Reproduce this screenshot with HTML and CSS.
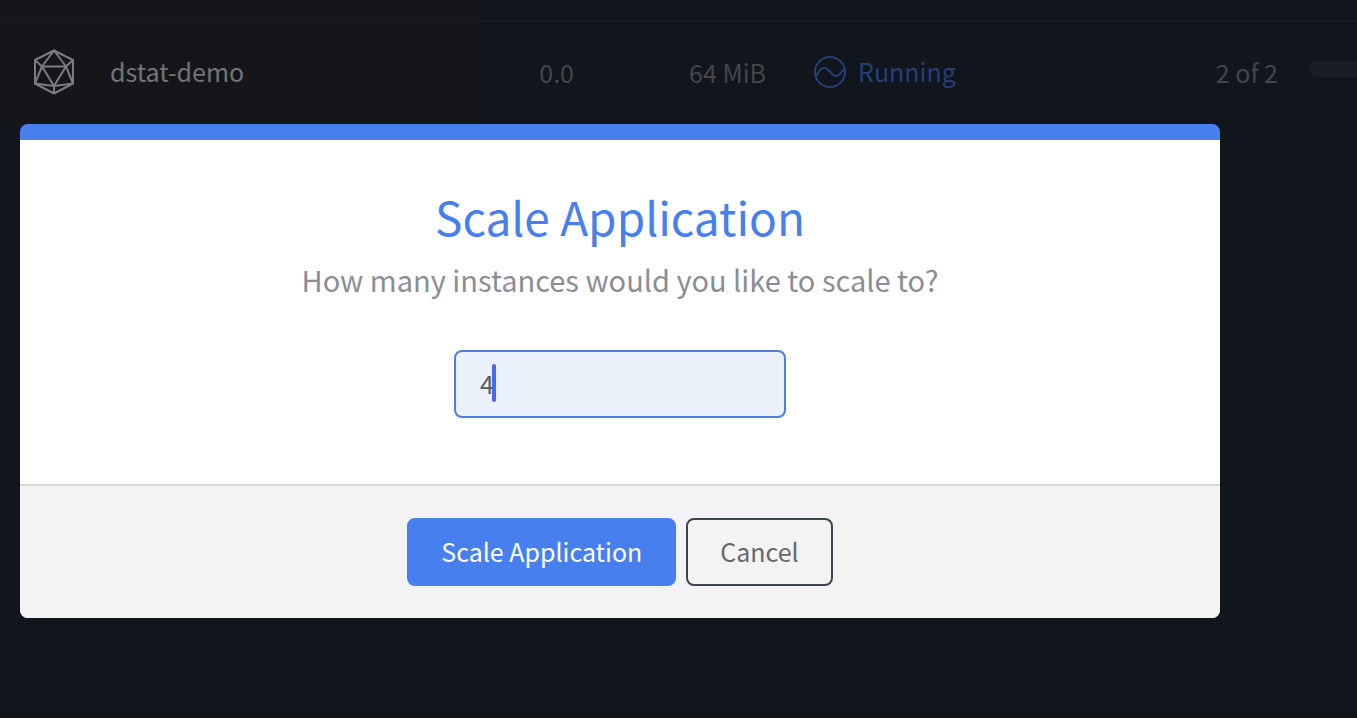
FILE: index.html
```html
<!DOCTYPE html>
<html lang="en">
<head>
<meta charset="utf-8">
<title>Scale Application</title>
<link rel="stylesheet" href="styles.css">
</head>
<body>
<main class="page">
  <table class="services">
    <colgroup>
      <col class="col-name"><col class="col-cpu"><col class="col-mem"><col class="col-status"><col class="col-count"><col class="col-bar">
    </colgroup>
    <tbody>
      <tr>
        <td class="name">
          <a class="service" href="#dstat-demo">
            <svg class="service-icon" width="42" height="46" viewBox="0 0 42 46" fill="none" stroke="currentColor" stroke-width="2" stroke-linejoin="round" aria-hidden="true">
              <path d="M21 1.500 40 11v23.500L21 44.500 2 34.500V11Z"/>
              <path d="M9 17.500h24L21 37Z"/>
              <path d="M21 1.500 9 17.500 2 34.500 21 37l19-2.500-7-17L21 1.500ZM2 11l7 6.500M40 11l-7 6.500M21 37v7.500"/>
            </svg>
            <span>dstat-demo</span>
          </a>
        </td>
        <td class="number">0.0</td>
        <td class="number">64 MiB</td>
        <td class="status">
          <span class="status-label">
            <svg width="32" height="32" viewBox="0 0 32 32" fill="none" stroke="currentColor" stroke-width="2" aria-hidden="true">
              <circle cx="16" cy="16" r="15"/>
              <path d="M2 20C5 16 6 12 10 12c6 0 7 8 12 8 4 0 5-4 8-7"/>
            </svg>
            <span>Running</span>
          </span>
        </td>
        <td class="number">2 of 2</td>
        <td class="bar-cell"><div class="bar"></div></td>
      </tr>
    </tbody>
  </table>
</main>
<div class="overlay">
  <form class="modal" role="dialog" aria-modal="true" aria-labelledby="modal-title">
    <div class="modal-body">
      <h1 class="modal-title" id="modal-title">Scale Application</h1>
      <label class="modal-text" for="instances">How many instances would you like to scale to?</label>
      <div class="field">
        <input class="field-input" id="instances" type="text" inputmode="numeric" value="4">
        <span class="caret"></span>
      </div>
    </div>
    <div class="modal-footer">
      <button class="button button-primary" type="submit">Scale Application</button>
      <button class="button button-outline" type="button">Cancel</button>
    </div>
  </form>
</div>
</body>
</html>
```
FILE: styles.css
```css
* {
  box-sizing: border-box;
}

body {
  margin: 0;
  background: #11151c;
  color: #45464a;
  font-family: "Noto Sans CJK SC", "Noto Sans", sans-serif;
  font-size: 25px;
  line-height: 32px;
}

.page {
  min-height: 100vh;
  padding-top: 20px;
  background: linear-gradient(to right, #15161a 480px, transparent 480px) no-repeat 0 0 / 100% 124px;
  border-bottom: 3px solid #131317;
}

.services {
  width: 100%;
  table-layout: fixed;
  border-collapse: collapse;
}

.col-name { width: 480px; }
.col-cpu { width: 94px; }
.col-mem { width: 192px; }
.col-status { width: 320px; }
.col-count { width: 192px; }

.services td {
  height: 104px;
  padding: 0 0 2px;
  border-top: 2px solid #171a20;
  border-bottom: 2px solid #13171d;
}

.service {
  display: flex;
  align-items: center;
  gap: 35px;
  padding-left: 33px;
  color: #737477;
  text-decoration: none;
}

.service span,
.status-label span {
  padding-bottom: 2px;
}

.service-icon {
  color: #7c7c7e;
}

.services .number {
  text-align: right;
}

.services .status {
  padding-left: 48px;
  color: #24407a;
}

.status-label {
  display: flex;
  align-items: center;
  gap: 12px;
}

.services .bar-cell {
  padding: 0 0 8px 32px;
}

.bar {
  height: 16px;
  border-radius: 6px 0 0 6px;
  background: #1a1d24;
}

.overlay {
  position: absolute;
  inset: 0;
  padding: 124px 20px 20px;
}

.modal {
  max-width: 1200px;
  overflow: hidden;
  border-top: 16px solid #487fee;
  border-radius: 8px;
  background: #fff;
}

.modal-body {
  display: flex;
  flex-direction: column;
  align-items: center;
  padding: 40px 24px 66px;
}

.modal-title {
  margin: 0;
  color: #487fee;
  font-size: 46px;
  font-weight: 400;
  line-height: 72px;
}

.modal-text {
  color: #8b8d96;
  font-size: 29px;
  line-height: 54px;
}

.field {
  position: relative;
  width: 332px;
  max-width: 100%;
  margin-top: 44px;
}

.field-input {
  display: block;
  width: 100%;
  height: 68px;
  padding: 0 24px 2px;
  border: 2px solid #4f81dc;
  border-radius: 8px;
  outline: none;
  background: #eaf1fb;
  color: #585a5e;
  font: inherit;
}

.caret {
  position: absolute;
  top: 14px;
  left: 38px;
  width: 4px;
  height: 38px;
  border-radius: 2px;
  background: #4f69e0;
}

.modal-footer {
  display: flex;
  justify-content: center;
  gap: 10px;
  padding: 32px;
  border-top: 2px solid #dadada;
  background: #f3f3f3;
}

.button {
  height: 68px;
  padding: 0 32px 2px;
  border: 2px solid #487fee;
  border-radius: 8px;
  font: inherit;
}

.button-primary {
  background: #487fee;
  color: #fff;
}

.button-outline {
  border-color: #3c4353;
  background: transparent;
  color: #66686c;
}
```
